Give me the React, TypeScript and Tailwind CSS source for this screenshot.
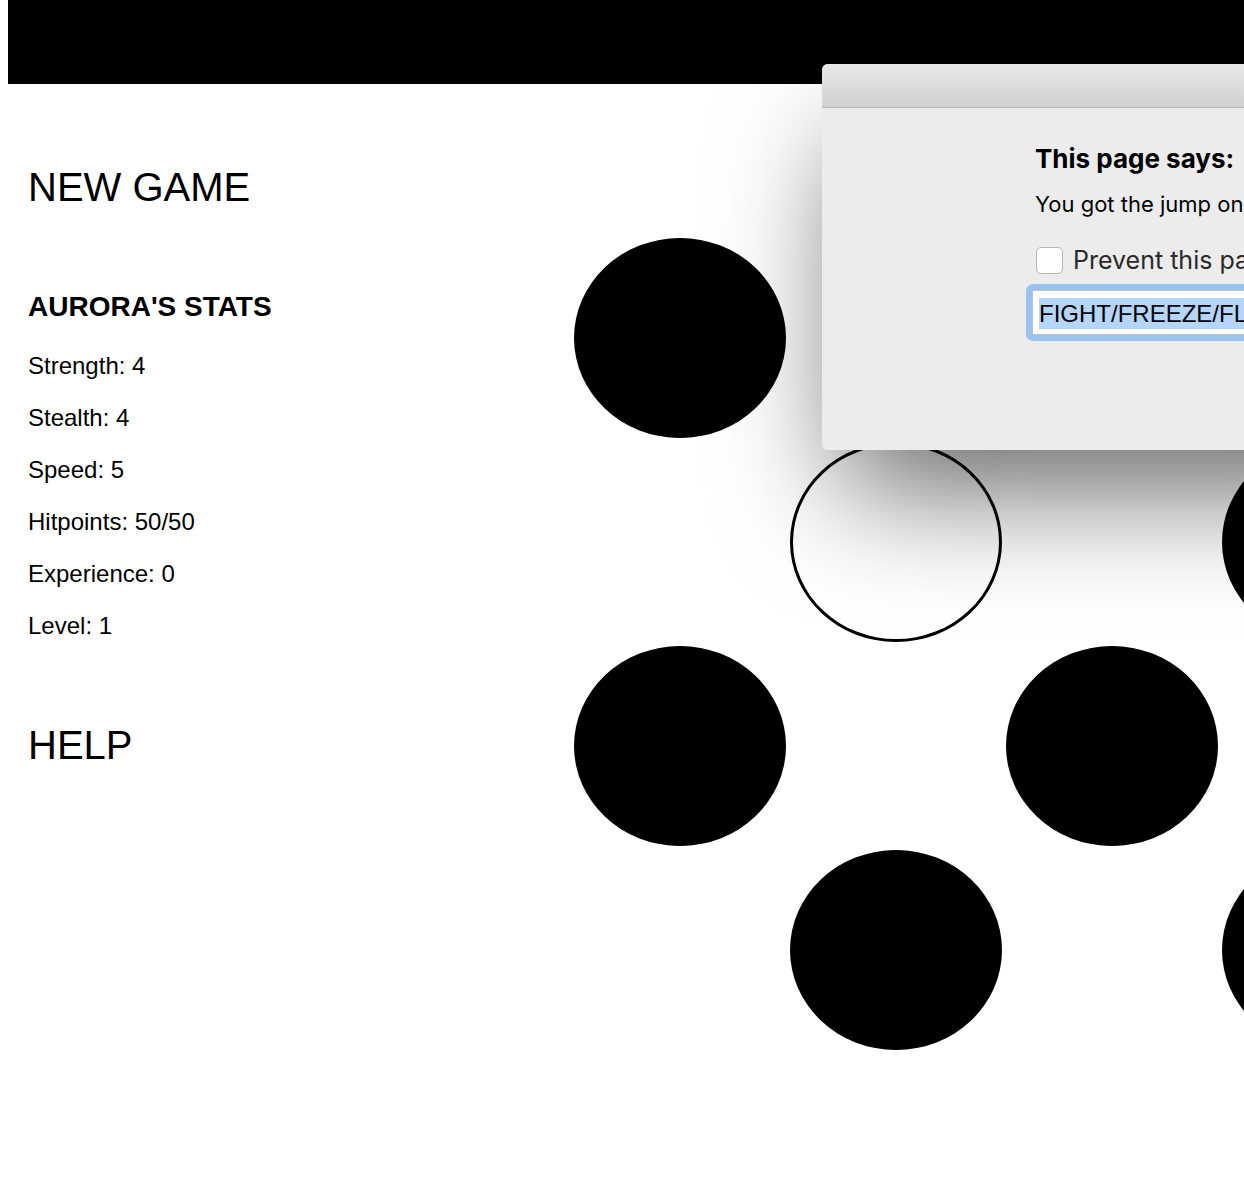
import React from "react";

const stats = [
  "Strength: 4",
  "Stealth: 4",
  "Speed: 5",
  "Hitpoints: 50/50",
  "Experience: 0",
  "Level: 1",
];

type Cell = { left: number; top: number; outlined?: boolean };
const cells: Cell[] = [
  { left: 0, top: 154 },
  { left: 432, top: 154 },
  { left: 216, top: 358, outlined: true },
  { left: 648, top: 358 },
  { left: 0, top: 562 },
  { left: 432, top: 562 },
  { left: 216, top: 766 },
  { left: 648, top: 766 },
];

export default function App() {
  return (
    <div
      className="relative h-[1180px] w-full overflow-hidden bg-white text-black"
      style={{ fontFamily: '"Liberation Sans", Arial, sans-serif' }}
    >
      <div className="ml-2 h-[84px] bg-black" />
      <div className="flex pl-2">
        <div className="w-[566px] shrink-0 pl-[20px]">
          <div className="mt-[83px] text-[40px] leading-[40px]">NEW GAME</div>
          <div className="mt-[80px] text-[28px] font-bold leading-[40px]">AURORA'S STATS</div>
          <div className="mt-[13px] flex flex-col">
            {stats.map((s) => (
              <div key={s} className="text-[24px] leading-[52px]">
                {s}
              </div>
            ))}
          </div>
          <div className="mt-[73px] text-[40px] leading-[40px]">HELP</div>
        </div>
        <div className="relative h-[1096px] flex-1">
          {cells.map((c, i) => (
            <div
              key={i}
              className={
                c.outlined
                  ? "absolute h-[200px] w-[212px] rounded-[50%] border-[3px] border-black bg-white"
                  : "absolute h-[200px] w-[212px] rounded-[50%] bg-black"
              }
              style={{ left: c.left, top: c.top }}
            />
          ))}
        </div>
      </div>

      {/* alert dialog */}
      <div
        className="absolute left-[822px] top-[64px] flex h-[386px] w-[640px] flex-col overflow-hidden rounded-[6px] bg-[#ececec] shadow-[0_60px_120px_-20px_rgba(0,0,0,0.6)]"
        style={{ fontFamily: 'Inter, "Noto Sans", sans-serif' }}
      >
        <div className="h-[44px] shrink-0 border-b border-[#b8b8b8] bg-gradient-to-b from-[#e9e7e9] to-[#d2d0d2]" />
        <div className="flex flex-col pl-[213px] pt-[35px]">
          <div className="whitespace-nowrap text-[26px] font-bold leading-[32px] text-black">
            This page says:
          </div>
          <div className="mt-[15px] whitespace-nowrap text-[22px] leading-[28px] text-black">
            You got the jump on the enemy! What will you do?
          </div>
          <div className="mt-[29px] flex items-center gap-[10px]">
            <div className="ml-px h-[27px] w-[27px] shrink-0 rounded-[5px] border border-[#b5b5b5] bg-white" />
            <div className="whitespace-nowrap text-[25px] leading-[27px] text-[#2a2a2a]">
              Prevent this page from creating additional dialogs
            </div>
          </div>
          <div className="-ml-[9px] mt-[10px] w-[440px] rounded-[7px] bg-[#9ac3ef] p-[6px]">
            <div className="flex h-[45px] items-center border border-[#c2c2c2] bg-white pl-[6px] pt-[2px]">
              <span
                className="whitespace-nowrap bg-[#b4d6fd] text-[24px] leading-[31px] text-black"
                style={{ fontFamily: '"Liberation Sans", Arial, sans-serif' }}
              >
                FIGHT/FREEZE/FLEE
              </span>
            </div>
          </div>
        </div>
      </div>
    </div>
  );
}
